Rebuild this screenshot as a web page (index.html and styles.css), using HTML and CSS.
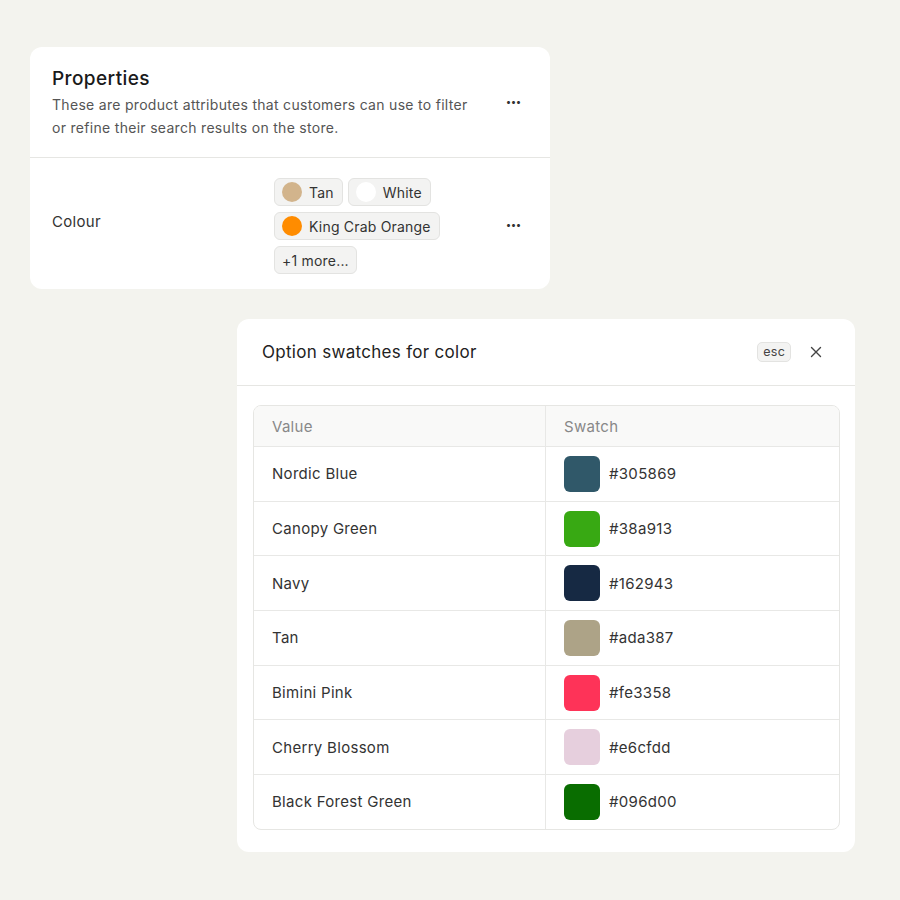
FILE: index.html
```html
<!DOCTYPE html>
<html>
<head>
<meta charset="utf-8">
<link rel="stylesheet" href="styles.css">
</head>
<body>
<div class="page">
  <section class="card props">
    <header class="props-head">
      <div class="props-text">
        <h1 class="props-title">Properties</h1>
        <p class="props-desc">These are product attributes that customers can use to filter or refine their search results on the store.</p>
      </div>
      <span class="dots">&middot;&middot;&middot;</span>
    </header>
    <div class="props-row">
      <div class="row-label">Colour</div>
      <div class="chips">
        <span class="chip"><span class="dot dot-tan"></span>Tan</span>
        <span class="chip"><span class="dot dot-white"></span>White</span>
        <span class="chip"><span class="dot dot-orange"></span>King Crab Orange</span>
        <span class="chip chip-more">+1 more...</span>
      </div>
      <span class="dots">&middot;&middot;&middot;</span>
    </div>
  </section>

  <section class="card modal">
    <header class="modal-head">
      <h2 class="modal-title">Option swatches for color</h2>
      <div class="modal-actions">
        <span class="kbd">esc</span>
        <svg class="close" width="12" height="12" viewBox="0 0 12 12"><path d="M1.5 1.5L10.5 10.5M10.5 1.5L1.5 10.5" stroke="#444" stroke-width="1.4" stroke-linecap="round"/></svg>
      </div>
    </header>
    <div class="modal-body">
      <div class="table">
        <div class="tr th">
          <div class="cell">Value</div>
          <div class="cell">Swatch</div>
        </div>
        <div class="tr"><div class="cell">Nordic Blue</div><div class="cell"><span class="sw" style="background:#305869"></span>#305869</div></div>
        <div class="tr"><div class="cell">Canopy Green</div><div class="cell"><span class="sw" style="background:#38a913"></span>#38a913</div></div>
        <div class="tr"><div class="cell">Navy</div><div class="cell"><span class="sw" style="background:#162943"></span>#162943</div></div>
        <div class="tr"><div class="cell">Tan</div><div class="cell"><span class="sw" style="background:#ada387"></span>#ada387</div></div>
        <div class="tr"><div class="cell">Bimini Pink</div><div class="cell"><span class="sw" style="background:#fe3358"></span>#fe3358</div></div>
        <div class="tr"><div class="cell">Cherry Blossom</div><div class="cell"><span class="sw" style="background:#e6cfdd"></span>#e6cfdd</div></div>
        <div class="tr"><div class="cell">Black Forest Green</div><div class="cell"><span class="sw" style="background:#096d00"></span>#096d00</div></div>
      </div>
    </div>
  </section>
</div>
</body>
</html>
```
FILE: styles.css
```css
* { box-sizing: border-box; }
html, body { margin: 0; padding: 0; }
body {
  background: #f3f3ee;
  font-family: Inter, "Noto Sans", sans-serif;
  color: #333;
  width: 900px;
  height: 900px;
  letter-spacing: 0.3px;
}
.page {
  padding: 47px 0 0 30px;
  display: flex;
  flex-direction: column;
}
.card {
  background: #fff;
  border-radius: 12px;
}
.props { width: 520px; }
.props-head {
  display: flex;
  align-items: center;
  padding: 20px 22px 18px 22px;
  border-bottom: 1px solid #e6e6e3;
}
.props-text { flex: 1; }
.props-title {
  margin: 0;
  font-size: 19px;
  font-weight: 500;
  color: #1a1a1a;
  line-height: 24px;
  letter-spacing: 0.4px;
}
.props-desc {
  margin: 2px 0 0;
  font-size: 14px;
  line-height: 23px;
  color: #555;
  width: 430px;
}
.dots {
  width: 30px;
  text-align: center;
  font-size: 18px;
  letter-spacing: -1px;
  color: #333;
  line-height: 10px;
  font-weight: 700;
}
.props-row {
  display: flex;
  align-items: center;
  padding: 20px 22px 15px 22px;
}
.row-label {
  width: 222px;
  font-size: 15px;
  color: #333;
  margin-bottom: 10px;
}
.chips {
  flex: 1;
  display: flex;
  flex-wrap: wrap;
  gap: 6px 5px;
  max-width: 220px;
  margin-right: auto;
}
.chip {
  display: inline-flex;
  align-items: center;
  height: 28px;
  padding: 0 8px 0 7px;
  gap: 7px;
  background: #f3f3f2;
  border: 1px solid #e3e3e1;
  border-radius: 6px;
  font-size: 14px;
  color: #333;
  letter-spacing: 0.2px;
}
.chip-more { padding: 0 7px; }
.dot {
  width: 20px;
  height: 20px;
  border-radius: 50%;
  display: inline-block;
}
.dot-tan { background: #d2b48c; }
.dot-white { background: #fff; }
.dot-orange { background: #ff8c00; }
.props-row .dots { margin-left: auto; }

.modal {
  width: 618px;
  margin: 30px 0 0 207px;
}
.modal-head {
  display: flex;
  align-items: center;
  height: 67px;
  padding: 0 33px 0 25px;
  border-bottom: 1px solid #e6e6e3;
}
.modal-title {
  flex: 1;
  margin: 0;
  font-size: 17px;
  font-weight: 400;
  color: #222;
}
.modal-actions {
  display: flex;
  align-items: center;
  gap: 19px;
}
.kbd {
  font-size: 12.5px;
  color: #444;
  background: #f3f3f2;
  border: 1px solid #e3e3e1;
  border-radius: 5px;
  padding: 2px 5px;
  line-height: 14px;
  letter-spacing: 0.2px;
}
.close { display: block; }
.modal-body { padding: 19px 15px 22px 16px; }
.table {
  border: 1px solid #e6e6e3;
  border-radius: 8px;
  overflow: hidden;
}
.tr {
  display: grid;
  grid-template-columns: 291px 1fr;
  height: 54.7px;
  border-top: 1px solid #e8e8e6;
}
.tr.th {
  height: 40px;
  border-top: none;
  background: #f9f9f8;
}
.cell {
  display: flex;
  align-items: center;
  padding: 0 18px;
  font-size: 15px;
  color: #333;
}
.th .cell { color: #888; }
.cell + .cell { border-left: 1px solid #e8e8e6; }
.sw {
  width: 36px;
  height: 36px;
  border-radius: 6px;
  margin-right: 9px;
  display: inline-block;
}
```
